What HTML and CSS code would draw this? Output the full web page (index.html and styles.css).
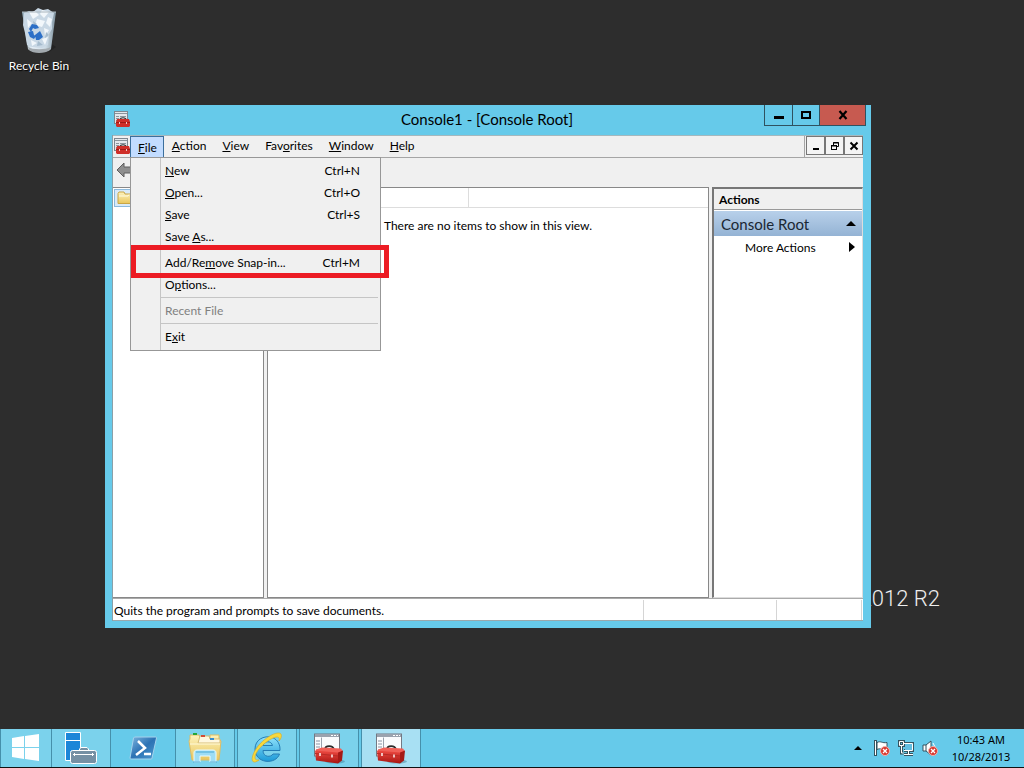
FILE: index.html
```html
<!DOCTYPE html>
<html lang="en">
<head>
    <meta charset="UTF-8">
    <meta name="viewport" content="width=device-width, initial-scale=1.0">
    <title>Console1 - [Console Root]</title>
    <link rel="stylesheet" href="styles.css">
</head>
<body>
    <!-- Shared icons -->
    <svg class="defs" aria-hidden="true">
        <defs>
            <linearGradient id="redBox" x1="0" y1="0" x2="0" y2="1">
                <stop offset="0" stop-color="#ee4a42"/>
                <stop offset="1" stop-color="#a81512"/>
            </linearGradient>
            <linearGradient id="folderFill" x1="0" y1="0" x2="0" y2="1">
                <stop offset="0" stop-color="#fdf3bd"/>
                <stop offset="1" stop-color="#e9c65c"/>
            </linearGradient>
            <linearGradient id="psFill" x1="0" y1="0" x2="1" y2="1">
                <stop offset="0" stop-color="#7fb6e0"/>
                <stop offset="0.5" stop-color="#2c72b4"/>
                <stop offset="1" stop-color="#4f9bd0"/>
            </linearGradient>
            <linearGradient id="ieFill" x1="0" y1="0" x2="0" y2="1">
                <stop offset="0" stop-color="#8fe2fb"/>
                <stop offset="1" stop-color="#1c9ad8"/>
            </linearGradient>
            <symbol id="mmc-small" viewBox="0 0 16 16">
                <rect x="0.5" y="0.5" width="13" height="12" fill="#e4e8ec" stroke="#7d8790"/>
                <path d="M1 2.5h12M2 5.5h3M2 7.5h3M2 9.5h2M6 5.5h6" stroke="#8a949c"/>
                <path d="M6 9C6 6 12 6 12 9" fill="none" stroke="#333" stroke-width="1.2"/>
                <path d="M3 8h12l1 3v4l-1 1H3l-1-1v-4z" fill="#cf2f29"/>
                <path d="M2 11.5h14" stroke="#a01a16"/>
                <path d="M5.5 11v2M12.5 11v2" stroke="#f3c9c6"/>
            </symbol>
            <symbol id="mmc-large" viewBox="0 0 32 32">
                <rect x="1.5" y="1.5" width="25" height="22" fill="#fafbfd" stroke="#737983"/>
                <path d="M2 3h24" stroke="#9aa2ae" stroke-width="3"/>
                <path d="M18 3h2M21 3h2M24 3h1" stroke="#fff"/>
                <path d="M8.5 5v18" stroke="#9aa2ae"/>
                <path d="M3 8.5h4M3 11.5h4M3 14.5h4M3 17.5h4" stroke="#8994a4"/>
                <ellipse cx="22" cy="29" rx="10" ry="2" fill="#44849c" opacity="0.5"/>
                <path d="M12 17C12 12.5 20 12.5 21 17" fill="none" stroke="#2b2b2b" stroke-width="1.6"/>
                <path d="M3 17l6-2 19 1 2 3-5 2L3 19z" fill="#f06058"/>
                <path d="M2 18l23 2v11L3 28z" fill="url(#redBox)"/>
                <path d="M25 20l5-2-1 10-4 3z" fill="#a51a16"/>
                <path d="M2 21l23 2.5" stroke="#b82a25"/>
                <path d="M7 20.500v3M19 22v3" stroke="#fff" stroke-width="1.4"/>
            </symbol>
            <symbol id="error-badge" viewBox="0 0 10 10">
                <circle cx="5" cy="5" r="4.5" fill="#d8382f" stroke="#f0b4ae"/>
                <path d="M3 3l4 4M7 3l-4 4" stroke="#fff" stroke-width="1.3"/>
            </symbol>
        </defs>
    </svg>

    <main class="desktop">
        <a class="desktop-icon" href="#">
            <svg width="38" height="46" viewBox="0 0 38 46">
                <defs>
                    <linearGradient id="binFill" x1="0" y1="0" x2="1" y2="0">
                        <stop offset="0" stop-color="#8ea7b6"/>
                        <stop offset="0.3" stop-color="#e7f0f7"/>
                        <stop offset="0.7" stop-color="#ccdae4"/>
                        <stop offset="1" stop-color="#7c909d"/>
                    </linearGradient>
                </defs>
                <path d="M29 34l7 5-7 5z" fill="#222"/>
                <path d="M2 4h34l-5 37c-3 4-20 4-23 0z" fill="url(#binFill)"/>
                <path d="M4 5l5-2 4 1 5-4 5 2 5-1 6 4-2 9 0 7-3 5-1 11-6 3-10-1-5-2-2-12-2-8z" fill="#c9d8e5"/>
                <path d="M9 4l6-1 4 4-6 4zM22 2l7 2-5 6-4-4zM7 11l5 4-4 5zM17 11l8 2-3 6-7-2zM28 9l4 2-2 8-4-4zM24 20l5 2-4 6zM22 31l6-2-3 8zM11 32l6 3-5 3z" fill="#f2f7fb"/>
                <path d="M13 13l4 3-3 3zM26 24l3 3-4 3zM18 33l5 4-6 1z" fill="#a5bbcd"/>
                <path d="M2 4h34" stroke="#aab6be" stroke-width="1"/>
                <path d="M8 39c5 3 17 3 23 0l-1 3c-5 4-17 4-21 0z" fill="#a2a9ae"/>
                <path d="M9 21l3-5 5 1 2 3-4 1-2-1-2 4zM8 24l5-1 1 4 2 1-2 3-4-2zM15 27l5-4 1 2 2 4-4 3-3 0z" fill="#2c6fc7"/>
            </svg>
            <span>Recycle Bin</span>
        </a>

        <div class="watermark">Windows Server 2012 R2</div>

        <section class="window">
            <header class="titlebar">
                <svg class="title-icon" width="16" height="16"><use href="#mmc-small"/></svg>
                <h1>Console1 - [Console Root]</h1>
                <div class="caption-buttons">
                    <button class="caption-btn" aria-label="Minimize">
                        <svg width="12" height="12" viewBox="0 0 12 12"><path d="M1 8.5h10" stroke="#000" stroke-width="3"/></svg>
                    </button>
                    <button class="caption-btn" aria-label="Maximize">
                        <svg width="12" height="12" viewBox="0 0 12 12"><rect x="2" y="3" width="8" height="6" fill="none" stroke="#000" stroke-width="2"/></svg>
                    </button>
                    <button class="caption-btn close" aria-label="Close">
                        <svg width="12" height="12" viewBox="0 0 12 12"><path d="M2.5 2l7 8M9.5 2l-7 8" stroke="#000" stroke-width="2.2"/></svg>
                    </button>
                </div>
            </header>

            <div class="client">
                <nav class="menubar">
                    <svg class="menubar-icon" width="16" height="16"><use href="#mmc-small"/></svg>
                    <div class="menu-wrap">
                        <button class="menu-btn open" aria-expanded="true"><u>F</u>ile</button>
                        <div class="dropdown">
                            <button class="menu-item"><span><u>N</u>ew</span><span>Ctrl+N</span></button>
                            <button class="menu-item"><span><u>O</u>pen...</span><span>Ctrl+O</span></button>
                            <button class="menu-item"><span><u>S</u>ave</span><span>Ctrl+S</span></button>
                            <button class="menu-item"><span>Save <u>A</u>s...</span></button>
                            <hr>
                            <button class="menu-item marked"><span>Add/Re<u>m</u>ove Snap-in...</span><span>Ctrl+M</span></button>
                            <button class="menu-item"><span>O<u>p</u>tions...</span></button>
                            <hr>
                            <button class="menu-item" disabled><span>Recent File</span></button>
                            <hr>
                            <button class="menu-item"><span>E<u>x</u>it</span></button>
                        </div>
                    </div>
                    <button class="menu-btn"><u>A</u>ction</button>
                    <button class="menu-btn"><u>V</u>iew</button>
                    <button class="menu-btn">Fav<u>o</u>rites</button>
                    <button class="menu-btn"><u>W</u>indow</button>
                    <button class="menu-btn"><u>H</u>elp</button>
                    <div class="mdi-buttons">
                        <button aria-label="Minimize child">
                            <svg width="10" height="10" viewBox="0 0 10 10"><path d="M2 8h6" stroke="#000" stroke-width="2"/></svg>
                        </button>
                        <button aria-label="Restore child">
                            <svg width="10" height="10" viewBox="0 0 10 10"><path d="M3.5 4V1.5h5v4H7M3 2h6M1 5h6" fill="none" stroke="#000"/><rect x="1.5" y="4.5" width="5" height="4" fill="none" stroke="#000"/></svg>
                        </button>
                        <button aria-label="Close child">
                            <svg width="10" height="10" viewBox="0 0 10 10"><path d="M1.5 1.5l7 7M8.5 1.5l-7 7" stroke="#000" stroke-width="2"/></svg>
                        </button>
                    </div>
                </nav>

                <div class="toolbar">
                    <button aria-label="Back">
                        <svg width="18" height="16" viewBox="0 0 18 16"><path d="M1 8l7-7v4h9v6H8v4z" fill="#8f8f8f" stroke="#5e5e5e"/></svg>
                    </button>
                </div>

                <div class="panes">
                    <div class="pane tree">
                        <a class="tree-item" href="#" aria-label="Console Root">
                            <svg width="16" height="14" viewBox="0 0 16 14"><path d="M1 12.5V2.5L2 1h5l1 2h6.5v9.5z" fill="url(#folderFill)" stroke="#c9a544"/><path d="M2 5h9l1-1.5" fill="none" stroke="#fffbe0"/></svg>
                        </a>
                    </div>
                    <div class="pane list">
                        <div class="column-head"><span></span></div>
                        <p>There are no items to show in this view.</p>
                    </div>
                    <aside class="pane actions">
                        <h2>Actions</h2>
                        <button class="action-group">Console Root
                            <svg width="10" height="5" viewBox="0 0 10 5"><path d="M0 5l5-5 5 5z"/></svg>
                        </button>
                        <button class="action-item">More Actions
                            <svg width="6" height="10" viewBox="0 0 6 10"><path d="M0 0l6 5-6 5z"/></svg>
                        </button>
                    </aside>
                </div>

                <footer class="statusbar">
                    <span class="status-text">Quits the program and prompts to save documents.</span>
                    <span class="status-cell"></span>
                    <span class="status-cell short"></span>
                </footer>
            </div>
        </section>
    </main>

    <div class="taskbar">
        <button class="task start" aria-label="Start">
            <svg width="28" height="28" viewBox="0 0 28 28"><path d="M0 4l12-2v11H0zM13 2l14-2v13H13zM0 14h12v11L0 23zM13 14h14v13l-14-2z" fill="#fff"/></svg>
        </button>
        <button class="task server" aria-label="Server Manager">
            <svg width="34" height="34" viewBox="0 0 34 34">
                <path d="M1.5 1.5h15v28h-15z" fill="#1b86d8" stroke="#fff"/>
                <path d="M2 9.5h14" stroke="#fff"/>
                <path d="M15.5 20v-2l1.5-1.5h6l1.5 1.5v2" fill="#7590a4" stroke="#fff"/>
                <rect x="6.5" y="19.5" width="26" height="13" rx="2" fill="#7590a4" stroke="#fff"/>
                <path d="M9 23.5h21M10.5 22v3M28.5 22v3" stroke="#fff"/>
            </svg>
        </button>
        <button class="task flat" aria-label="PowerShell">
            <svg width="28" height="24" viewBox="0 0 28 24">
                <path d="M5.5 1h21a1 1 0 0 1 1 1L23 22a1 1 0 0 1-1 1H2a1 1 0 0 1-1-1L4.5 2z" fill="url(#psFill)" stroke="#a5d2ed"/>
                <path d="M9 5l7 7-9 7M15 18h7" fill="none" stroke="#fff" stroke-width="2.5"/>
            </svg>
        </button>
        <button class="task explorer" aria-label="File Explorer">
            <svg width="34" height="32" viewBox="0 0 34 32">
                <path d="M2 7V3h9l1 3h10V3h9v4l2 2-2 19H4L1 9z" fill="url(#folderFill)" stroke="#dfbd64"/>
                <path d="M12 4h9l1 3h10v4H10z" fill="#fff8df" stroke="#d7bd75"/>
                <path d="M5 2h4" stroke="#23a638" stroke-width="2"/>
                <path d="M13 4h4" stroke="#d24c35" stroke-width="2"/>
                <path d="M22 7h4" stroke="#388ed0" stroke-width="2"/>
                <path d="M2 12h30" stroke="#fff9d9"/>
                <path d="M6 30v-9c0-2 1-3 3-3h16c2 0 3 1 3 3v9h-6v-6H12v6z" fill="#9eddf5" stroke="#e9fbff"/>
                <path d="M5 30h7M22 30h7M8 20h18" stroke="#4aa9d4"/>
            </svg>
        </button>
        <button class="task" aria-label="Internet Explorer">
            <svg width="34" height="32" viewBox="0 0 34 32">
                <path d="M30 18.5H13c0 7 8 7 10 3.5h6.5C26 33 5 32 5 17 5 1 31 0 30 18.5zM13 13.5h9.5c-1-5-8.5-5-9.5 0z" fill="url(#ieFill)" stroke="#257eb6" fill-rule="evenodd"/>
                <path d="M9 28C1 34 0 26 6 17 13 6 28-2 31 2c1 2 0 5-2 7 1-4-1-5-6-3C14 10 4 21 5 26c0 2 2 2 4 2z" fill="#f8d83c" stroke="#d5aa24" stroke-width="0.6"/>
            </svg>
        </button>
        <button class="task" aria-label="Console">
            <svg width="32" height="33"><use href="#mmc-large"/></svg>
        </button>
        <button class="task active" aria-label="Console1">
            <svg width="32" height="33"><use href="#mmc-large"/></svg>
        </button>

        <div class="tray">
            <button aria-label="Show hidden icons">
                <svg width="8" height="4" viewBox="0 0 8 4"><path d="M0 4l4-4 4 4z"/></svg>
            </button>
            <button aria-label="Action Center">
                <svg width="16" height="16" viewBox="0 0 16 16">
                    <path d="M1.5 0v16" stroke="#35535f" stroke-width="3"/>
                    <path d="M3 2.5c4-2 5 1 10 0v7c-5 1-6-2-10 0z" fill="#fff" stroke="#35535f"/>
                    <path d="M1.5 1v14" stroke="#fff"/>
                    <use href="#error-badge" x="6" y="6" width="10" height="10"/>
                </svg>
            </button>
            <button aria-label="Network">
                <svg width="16" height="16" viewBox="0 0 16 16">
                    <path d="M6 3.5h8.5v7H6M10.5 11v3M6 14.5h9M1.5 1.5h4v4h-4zM3.5 6v7h2" fill="none" stroke="#35535f" stroke-width="3"/>
                    <rect x="7" y="4" width="7" height="6" fill="#62bfe2"/>
                    <path d="M6 3.5h8.5v7H6M10.5 11v3M6 14.5h9M1.5 1.5h4v4h-4zM3.5 6v7h2" fill="none" stroke="#fff"/>
                </svg>
            </button>
            <button aria-label="Volume">
                <svg width="16" height="16" viewBox="0 0 16 16">
                    <path d="M1 5h3l5-4v14l-5-4H1z" fill="#fff" stroke="#35535f"/><path d="M4 5v6" stroke="#35535f"/>
                    <path d="M11 3l2 4" stroke="#fff"/>
                    <use href="#error-badge" x="6" y="6" width="10" height="10"/>
                </svg>
            </button>
            <time class="clock"><span>10:43 AM</span><span>10/28/2013</span></time>
        </div>
    </div>
</body>
</html>
```

FILE: styles.css
```css
* {
    margin: 0;
    padding: 0;
    box-sizing: border-box;
}

body {
    font-family: Lato, 'Open Sans', sans-serif;
    font-size: 12px;
    color: #000;
    background: #2d2d2d;
    height: 100vh;
    display: flex;
    flex-direction: column;
    overflow: hidden;
}

button {
    font: inherit;
    color: inherit;
    background: none;
    border: none;
}

svg {
    display: block;
    flex-shrink: 0;
}

.defs {
    position: absolute;
    width: 0;
    height: 0;
}

/* Desktop */
.desktop {
    position: relative;
    flex: 1;
    min-height: 0;
}

.desktop-icon {
    position: absolute;
    left: 0;
    top: 8px;
    width: 78px;
    display: flex;
    flex-direction: column;
    align-items: center;
    gap: 4px;
    line-height: 16px;
    color: #fff;
    text-decoration: none;
    text-shadow: 1px 1px 1px #000;
}

.watermark {
    position: absolute;
    right: 84px;
    bottom: 114px;
    font-family: Roboto, sans-serif;
    font-size: 22px;
    font-weight: 300;
    line-height: 32px;
    color: #eee;
}

/* Window */
.window {
    position: absolute;
    left: 105px;
    right: 153px;
    top: 105px;
    bottom: 101px;
    display: flex;
    flex-direction: column;
    padding: 0 8px 7px 7px;
    background: #66caea;
}

.titlebar {
    height: 30px;
    padding-bottom: 2px;
    display: flex;
    align-items: center;
    justify-content: space-between;
}

.title-icon {
    margin-left: 2px;
    width: 16px;
}

.titlebar h1 {
    flex: 1;
    padding-left: 80px;
    font-size: 15px;
    font-weight: 400;
    line-height: 20px;
    text-align: center;
}

.caption-buttons {
    display: flex;
    align-self: flex-start;
    height: 21px;
    margin-right: -3px;
    border: 1px solid #2f5260;
    border-top: none;
}

.caption-btn {
    width: 27px;
    display: flex;
    align-items: center;
    justify-content: center;
}

.caption-btn + .caption-btn {
    border-left: 1px solid #2f5260;
}

.caption-btn.close {
    width: 46px;
    background: #c75a50;
}

.client {
    flex: 1;
    min-height: 0;
    display: flex;
    flex-direction: column;
    background: #f0f0f0;
    border-left: 1px solid #8aa0a8;
}

/* Menu */
.menubar {
    height: 23px;
    display: flex;
    border-top: 1px solid #a5b8be;
    border-bottom: 1px solid #a5a5a5;
}

.menubar-icon {
    margin: 2px 0 0 1px;
}

.menu-wrap {
    position: relative;
    z-index: 2;
}

.menu-btn {
    height: 21px;
    padding: 0 8px 2px;
}

.menu-btn.open {
    height: 22px;
    padding: 0 6px 0 7px;
    border: 1px solid #3c6f9c;
    background: #c2dcff;
}

.dropdown {
    position: absolute;
    left: 0;
    top: 21px;
    width: 251px;
    padding: 2px;
    border: 1px solid #979797;
    background: linear-gradient(to right, transparent 29px, #c5c5c5 29px, #c5c5c5 30px, transparent 30px) #f0f0f0;
}

.menu-item {
    width: 100%;
    height: 22px;
    padding: 0 18px 2px 32px;
    display: flex;
    align-items: center;
    justify-content: space-between;
}

.menu-item:disabled {
    color: #808080;
}

.menu-item.marked {
    position: relative;
}

/* Highlight frame lying over the menu */
.menu-item.marked::after {
    content: '';
    position: absolute;
    left: -2px;
    right: -11px;
    top: -7px;
    bottom: -4px;
    border: 5px solid #ec1c24;
}

.dropdown hr {
    height: 4px;
    margin-left: 28px;
    border: none;
    background: linear-gradient(#c5c5c5, #c5c5c5) 0 1px / 100% 1px no-repeat;
}

.mdi-buttons {
    display: flex;
    margin-left: auto;
    padding-left: 1px;
    border-left: 1px solid #a5a5a5;
}

.mdi-buttons button {
    width: 19px;
    height: 19px;
    display: flex;
    align-items: center;
    justify-content: center;
    border: 1px solid #777;
    background: #f4f4f4;
}

.toolbar {
    height: 29px;
    padding: 4px 3px;
}

/* Panes */
.panes {
    flex: 1;
    min-height: 0;
    display: grid;
    grid-template-columns: 151px 1fr 151px;
    gap: 3px;
}

.pane {
    min-width: 0;
    border: 1px solid #888;
    background: #fff;
}

.tree {
    border-left: none;
    padding: 1px;
}

.tree-item {
    display: block;
    width: 120px;
    padding: 1px 2px;
    border: 1px solid #8cb9dc;
    background: #d8eaf9;
}

.column-head {
    height: 20px;
    border-bottom: 1px solid #ddd;
}

.column-head span {
    display: block;
    width: 201px;
    height: 100%;
    border-right: 1px solid #ddd;
}

.list p {
    padding-top: 10px;
    line-height: 16px;
    text-align: center;
}

.actions {
    border: 1px solid #ddd;
    border-top: 2px solid #777;
    border-left: 2px solid #777;
}

.actions h2 {
    height: 21px;
    padding-left: 5px;
    font-size: 12px;
    line-height: 21px;
    background: #f0f0f0;
    border-bottom: 1px solid #999;
}

.action-group,
.action-item {
    width: 100%;
    display: flex;
    align-items: center;
    justify-content: space-between;
}

.action-group {
    height: 25px;
    margin-top: 1px;
    padding: 0 6px 0 7px;
    font-size: 15px;
    color: #1a2733;
    background: linear-gradient(#b8d0ea, #94b3d4);
}

.action-group svg,
.action-item svg {
    fill: #000;
}

.action-item {
    height: 22px;
    padding: 0 7px 0 31px;
}

/* Status bar */
.statusbar {
    height: 23px;
    display: flex;
    background: #fff;
    border-top: 1px solid #aaa;
    border-bottom: 1px solid #9aa8ac;
}

.status-text {
    flex: 1;
    padding-left: 1px;
    line-height: 23px;
}

.status-cell {
    width: 133px;
    margin-top: 1px;
    border-left: 1px solid #d5d5d5;
}

.status-cell.short {
    width: 86px;
    margin-right: 1px;
    border-right: 1px solid #d5d5d5;
}

/* Taskbar */
.taskbar {
    height: 39px;
    display: flex;
    background: #66caea;
    border-bottom: 1px solid #111;
}

.task {
    width: 60px;
    margin-right: 2px;
    display: flex;
    align-items: center;
    justify-content: center;
    border: 1px solid #4590ab;
    border-width: 0 1px;
    background: #7bd2ec;
}

.task.start {
    width: 52px;
    margin: 0;
}

.task.server {
    width: 59px;
    margin: 0;
    border-left: none;
}

.task.flat {
    width: 64px;
    margin: 0;
    border: none;
    background: none;
}

.task.active {
    background: #a8e0f3;
}

.tray {
    margin-left: auto;
    padding-right: 12px;
    display: flex;
    align-items: center;
    gap: 8px;
}

.tray button:first-child {
    margin-right: 4px;
}

.clock {
    width: 62px;
    margin-left: 4px;
    display: flex;
    flex-direction: column;
    align-items: center;
    font-family: 'Noto Sans', sans-serif;
    font-size: 11px;
    line-height: 17px;
}
```
